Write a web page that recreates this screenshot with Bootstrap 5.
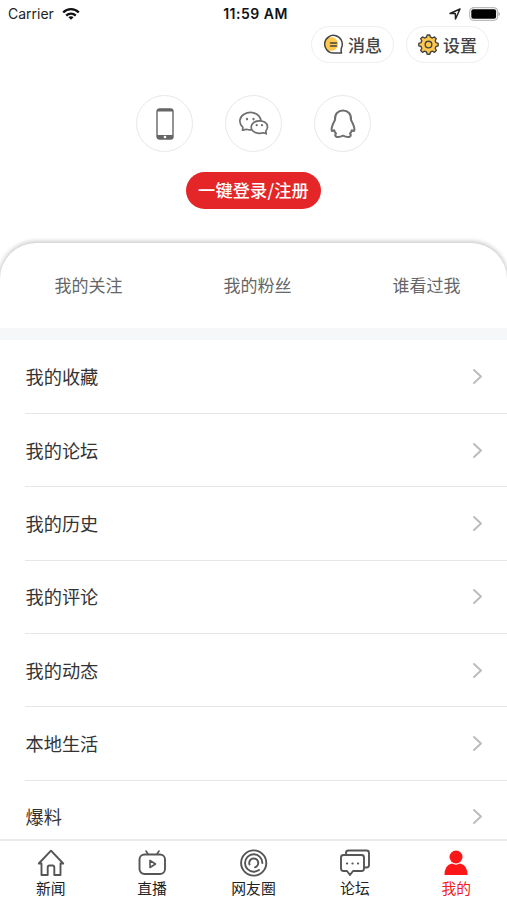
<!DOCTYPE html>
<html lang="zh-CN">
<head>
<meta charset="utf-8">
<meta name="viewport" content="width=device-width, initial-scale=1">
<title>我的</title>
<link rel="stylesheet" href="https://cdn.jsdelivr.net/npm/bootstrap@5.3.0/dist/css/bootstrap.min.css">
<style>
body{font-family:"Noto Sans CJK SC",sans-serif;color:#333;background:#fff}
svg{display:block;flex:none;fill:none;stroke-linecap:round;stroke-linejoin:round}
.app{height:900px}
.status-bar{height:26px;padding:2px 7px 0 8px;font:14px/24px Inter,sans-serif;color:#222}
.status-side{flex:1 1 0}
.wifi{stroke-linecap:butt}
.clock{font-weight:600;font-size:14px;letter-spacing:.5px;color:#111;padding-left:3px}
.tools{padding-right:18px;gap:12px;height:37px}
.pill{width:83px;height:37px;border:1px solid #eee;font-size:17px;font-weight:500;line-height:35px;color:#444;gap:4px;padding:0}
.logins{margin-top:32px;gap:32px}
.round-btn{width:57px;height:57px;border:1px solid #e8e8e8;color:#666}
.login-btn{width:135px;height:37px;margin:20px auto 0;background:#e42628;color:#fff;font-size:17.2px;font-weight:500;line-height:35px;padding:0 0 2px;border:0;letter-spacing:.15px}
.sheet-wrap{margin-top:23px;padding-top:11px;overflow:hidden}
.sheet{height:85px;border-radius:36px 36px 0 0;box-shadow:0 -1px 4px 1px #ccc;background:#fff}
.sheet>div{font-size:17px;line-height:26px;color:#666;padding-bottom:2px}
.divider{height:12px;background:#f5f7f9}
.menu{height:499px;padding-left:25px}
.menu-row{height:73.33px;border-bottom:1px solid #e6e6e6;padding:0 24px 0 .5px;font-size:18.2px;color:#333}
.menu-row:first-child{height:74px}
.tabs{height:61px;border-top:2px solid #ebebeb;background:#fff}
.tab-link{font-size:14.8px;line-height:20px;color:#222;padding-top:6px}
.tab-link svg{stroke:#555;stroke-width:1.9;margin-bottom:1px}
.tab-link.current{color:#f21b1b}
</style>
</head>
<body>
<div class="app d-flex flex-column overflow-hidden">
<header class="status-bar d-flex align-items-center flex-shrink-0">
<div class="status-side d-flex align-items-center gap-2"><span>Carrier</span>
<svg class="wifi" width="18" height="14" viewBox="0 0 18 14" stroke="#111" stroke-width="2.3"><path d="M1.2 5.500C5.500 1 12.500 1 16.800 5.500M4.200 8.600c2.700-2.700 6.900-2.700 9.600 0"/><path d="M9 12.800L6.400 10.300c1.500-1.300 3.700-1.300 5.200 0z" fill="#111" stroke="none"/></svg></div>
<div class="clock">11:59 AM</div>
<div class="status-side d-flex align-items-center justify-content-end gap-2">
<svg width="12" height="12" viewBox="0 0 12 12" stroke="#222" stroke-width="1.500"><path d="M11 1L1 5.500h5.300L6.500 11z"/></svg>
<svg width="31" height="14" viewBox="0 0 31 14"><rect x=".7" y=".7" width="28" height="12.600" rx="3.500" stroke="#aaa"/><rect x="2.300" y="2.300" width="24.800" height="9.400" rx="2" fill="#000"/><path d="M29.500 5v4q1.500-.5 1.500-2T29.500 5" fill="#aaa"/></svg></div>
</header>
<div class="tools d-flex justify-content-end flex-shrink-0">
<div class="pill rounded-pill d-flex align-items-center justify-content-center">
<svg width="21" height="21" viewBox="0 0 21 21"><circle cx="8" cy="10" r="7" fill="#ffc94d"/><path d="M18.500 19h-8A8.800 8.800 0 1 1 18.500 13.800q-.8 2 0 5.200zM7.500 9h6M7.500 12h6" stroke="#444" stroke-width="1.500"/></svg><span>消息</span></div>
<div class="pill rounded-pill d-flex align-items-center justify-content-center">
<svg width="21" height="21" viewBox="0 0 21 21" stroke="#444" stroke-width="1.400"><path fill="#ffc94d" d="M8.500 3.200L9.200 1h2.600l.7 2.200 1.900.8 2.100-1.100 1.700 1.800-1 2.100.7 1.800 2.300.7v2.500l-2.200.7-.8 1.800 1.100 2.200-1.800 1.800-2.100-1.100-1.900.8-.7 2.200H9.200L8.500 18l-1.900-.8-2.100 1.100-1.800-1.800 1.100-2.200-.8-1.800-2.200-.7V9.300l2.300-.7.7-1.800-1.100-2.100 1.800-1.800L6.600 4z"/><circle cx="10.500" cy="10.600" r="3.300"/></svg><span>设置</span></div>
</div>
<div class="logins d-flex justify-content-center flex-shrink-0">
<div class="round-btn rounded-circle d-flex align-items-center justify-content-center"><svg width="18" height="32" viewBox="0 0 18 32"><rect x="1" y="1" width="16" height="30" rx="2.500" stroke="#666" stroke-width="1.400"/><path d="M1 3.500Q1 1 3.500 1h11Q17 1 17 3.500zM1 27h16v1.500q0 2.500-2.500 2.500h-11Q1 31 1 28.500z" fill="#666"/><circle cx="9" cy="29" r="1.300" fill="#fff"/></svg></div>
<div class="round-btn rounded-circle d-flex align-items-center justify-content-center"><svg width="30" height="26" viewBox="0 0 30 26" stroke="#707070" stroke-width="1.700"><path d="M12 18.800q-2.300.2-4.500-.5L3.500 19.200l.4-2.900C-1 12 .5 6 5 3.300c6.500-4 15.500-1.300 17 6.200"/><path d="M27.300 22.800l-3-1c-5.500 1.500-12.100-.6-12.100-5.800 0-8 16.300-8.200 16.300-.3q0 2.500-1.700 4.300z"/><path stroke-width="2.200" d="M8 7.900v.4M14.500 7.900v.4M17.700 14v.2M23 14v.2"/></svg></div>
<div class="round-btn rounded-circle d-flex align-items-center justify-content-center"><svg width="26" height="30" viewBox="0 0 26 30" stroke="#707070" stroke-width="2"><path d="M5 11C4.500 5 8 1.500 13 1.500S21.500 5 21 11c2 3.600 3.700 6.800 3.400 10-.2 1.500-1.400 1-2.600.2q-.4 2-1.800 3.300c1.500 1.600.8 3-1 3.400-2.300.4-4.200-.3-6-1.200-1.800.9-3.700 1.600-6 1.200-1.800-.4-2.500-1.800-1-3.400q-1.400-1.300-1.800-3.300c-1.200.8-2.400 1.300-2.600-.2C1.300 17.800 3 14.600 5 11z"/></svg></div>
</div>
<button class="login-btn btn rounded-pill flex-shrink-0">一键登录/注册</button>
<div class="sheet-wrap flex-shrink-0"><div class="sheet row g-0 align-items-center text-center"><div class="col ps-2">我的关注</div><div class="col ps-2">我的粉丝</div><div class="col ps-2">谁看过我</div></div></div>
<div class="divider flex-shrink-0"></div>
<main class="menu overflow-hidden flex-shrink-0">
<div class="menu-row d-flex align-items-center justify-content-between"><span>我的收藏</span><svg width="11" height="17" viewBox="0 0 11 17" stroke="#bbb" stroke-width="1.900"><path d="M2 2l7 6.500-7 6.500"/></svg></div>
<div class="menu-row d-flex align-items-center justify-content-between"><span>我的论坛</span><svg width="11" height="17" viewBox="0 0 11 17" stroke="#bbb" stroke-width="1.900"><path d="M2 2l7 6.500-7 6.500"/></svg></div>
<div class="menu-row d-flex align-items-center justify-content-between"><span>我的历史</span><svg width="11" height="17" viewBox="0 0 11 17" stroke="#bbb" stroke-width="1.900"><path d="M2 2l7 6.500-7 6.500"/></svg></div>
<div class="menu-row d-flex align-items-center justify-content-between"><span>我的评论</span><svg width="11" height="17" viewBox="0 0 11 17" stroke="#bbb" stroke-width="1.900"><path d="M2 2l7 6.500-7 6.500"/></svg></div>
<div class="menu-row d-flex align-items-center justify-content-between"><span>我的动态</span><svg width="11" height="17" viewBox="0 0 11 17" stroke="#bbb" stroke-width="1.900"><path d="M2 2l7 6.500-7 6.500"/></svg></div>
<div class="menu-row d-flex align-items-center justify-content-between"><span>本地生活</span><svg width="11" height="17" viewBox="0 0 11 17" stroke="#bbb" stroke-width="1.900"><path d="M2 2l7 6.500-7 6.500"/></svg></div>
<div class="menu-row d-flex align-items-center justify-content-between"><span>爆料</span><svg width="11" height="17" viewBox="0 0 11 17" stroke="#bbb" stroke-width="1.900"><path d="M2 2l7 6.500-7 6.500"/></svg></div>
</main>
<nav class="tabs row g-0 flex-shrink-0">
<div class="tab-link col d-flex flex-column align-items-center"><svg width="30" height="30" viewBox="0 0 30 30"><path d="M5.500 16.500H2.800L15 3.700 27.200 16.500h-2.700V28h-6.200v-7.500q0-2-1.800-2h-3q-1.800 0-1.800 2V28H5.500z"/></svg><span>新闻</span></div>
<div class="tab-link col d-flex flex-column align-items-center"><svg width="30" height="30" viewBox="0 0 30 30"><rect x="2.500" y="7.500" width="25.500" height="19.500" rx="5"/><path stroke-width="1.600" d="M11 7L9 4M20 7l2-3M13 13.500v7l5.500-3.500z"/></svg><span>直播</span></div>
<div class="tab-link col d-flex flex-column align-items-center"><svg width="30" height="30" viewBox="0 0 30 30"><circle cx="14.700" cy="16" r="12.600"/><path d="M23.400 16A8.700 8.700 0 1 0 14.700 24.700Q17.500 24.700 20 23"/><path d="M10.500 17.500A4.500 4.500 0 1 1 16 20.300"/></svg><span>网友圈</span></div>
<div class="tab-link col d-flex flex-column align-items-center"><svg width="30" height="30" viewBox="0 0 30 30"><path d="M6 7.500V6q0-2.500 2.500-2.500h18Q29 3.500 29 6v12q0 2.500-2.500 2.500H25M3.500 8h18Q24 8 24 10.500v11q0 2.500-2.500 2.500H13l-3 4-3-4H3.500Q1 24 1 21.500v-11Q1 8 3.500 8z"/><path stroke-width="2.200" d="M7 16.500h.1M12.500 16.500h.1M18 16.500h.1"/></svg><span>论坛</span></div>
<div class="tab-link current col d-flex flex-column align-items-center"><svg width="30" height="30" viewBox="0 0 30 30"><g fill="#fb1717" stroke="none"><circle cx="15" cy="10" r="6.500"/><path d="M3.500 28q0-10 7.500-11.500 4 2.300 8 0 7.500 1.500 7.500 11.500z"/></g></svg><span>我的</span></div>
</nav>
</div>
<script src="https://cdn.jsdelivr.net/npm/bootstrap@5.3.0/dist/js/bootstrap.bundle.min.js"></script>
</body>
</html>
